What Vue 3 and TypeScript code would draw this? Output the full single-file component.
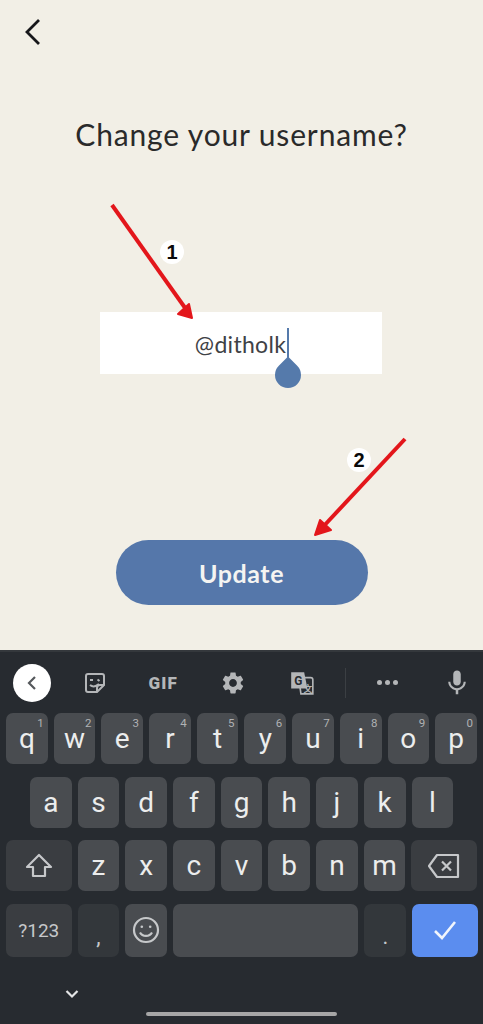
<script setup lang="ts">
const row1 = [
  { l: 'q', n: '1' }, { l: 'w', n: '2' }, { l: 'e', n: '3' }, { l: 'r', n: '4' }, { l: 't', n: '5' },
  { l: 'y', n: '6' }, { l: 'u', n: '7' }, { l: 'i', n: '8' }, { l: 'o', n: '9' }, { l: 'p', n: '0' },
]
const row2 = ['a', 's', 'd', 'f', 'g', 'h', 'j', 'k', 'l']
const row3 = ['z', 'x', 'c', 'v', 'b', 'n', 'm']
</script>

<template>
  <div class="screen">
    <main class="content">
      <button class="back" aria-label="Back">
        <svg width="18" height="28" viewBox="0 0 18 28"><path d="M15 2 3 14l12 12" fill="none" stroke="#17171a" stroke-width="2.8" /></svg>
      </button>
      <h1 class="title">Change your username?</h1>
      <div class="field">
        <span class="value">@ditholk</span>
        <span class="cursor"></span>
        <span class="handle"></span>
      </div>
      <button class="update">Update</button>

      <svg class="arrows" width="483" height="650" viewBox="0 0 483 650">
        <path d="M112 205 188 312" stroke="#e3161b" stroke-width="4" fill="none" />
        <path d="M192 318 178 314 189 304Z" fill="#e3161b" stroke="#e3161b" stroke-width="2" stroke-linejoin="round" />
        <path d="M405 439 321 529" stroke="#e3161b" stroke-width="4" fill="none" />
        <path d="M315 535 320 520 331 530Z" fill="#e3161b" stroke="#e3161b" stroke-width="2" stroke-linejoin="round" />
      </svg>
      <span class="badge badge-one">1</span>
      <span class="badge badge-two">2</span>
    </main>

    <section class="keyboard">
      <div class="toolbar">
        <span class="tool-back">
          <svg width="16" height="18" viewBox="0 0 16 18"><path d="M11 3 5 9l6 6" fill="none" stroke="#55585c" stroke-width="2.2" /></svg>
        </span>
        <span class="tool">
          <svg width="24" height="24" viewBox="0 0 24 24" fill="none" stroke="#b4b6b8" stroke-width="2">
            <path d="M5 3h14a2 2 0 0 1 2 2v9l-7 7H5a2 2 0 0 1-2-2V5a2 2 0 0 1 2-2Z" />
            <path d="M7 14c3 2.500 6 1.500 9-1M14 21v-4a3 3 0 0 1 3-3h4" />
            <path d="M7 9h3M14.500 8.500l2 1.500" />
          </svg>
        </span>
        <span class="tool gif">GIF</span>
        <span class="tool">
          <svg width="26" height="26" viewBox="0 0 24 24"><path fill="#b4b6b8" d="M19.14 12.94c.04-.3.06-.61.06-.94 0-.32-.02-.64-.07-.94l2.03-1.58c.18-.14.23-.41.12-.61l-1.92-3.32c-.12-.22-.37-.29-.59-.22l-2.39.96c-.5-.38-1.03-.7-1.62-.94l-.36-2.54c-.04-.24-.24-.41-.48-.41h-3.84c-.24 0-.43.17-.47.41l-.36 2.540c-.59.24-1.13.57-1.62.94l-2.39-.96c-.22-.08-.47 0-.59.22L2.74 8.87c-.12.21-.08.47.12.61l2.03 1.58c-.05.3-.09.63-.09.94s.02.64.07.94l-2.03 1.58c-.18.14-.23.41-.12.61l1.92 3.32c.12.22.37.29.59.22l2.39-.96c.5.38 1.03.7 1.62.94l.36 2.54c.05.24.24.41.48.41h3.84c.24 0 .44-.17.47-.41l.36-2.54c.59-.24 1.13-.56 1.62-.94l2.39.96c.22.08.47 0 .59-.22l1.92-3.32c.12-.22.07-.47-.12-.61l-2.01-1.58zM12 15.6c-1.98 0-3.6-1.62-3.6-3.6s1.62-3.6 3.6-3.6 3.6 1.62 3.6 3.6-1.62 3.6-3.6 3.6z" /></svg>
        </span>
        <span class="tool">
          <svg width="26" height="26" viewBox="0 0 24 24">
            <path d="M9 7h11a2 2 0 0 1 2 2v13H11Z" fill="#272b30" stroke="#b4b6b8" stroke-width="1.500" />
            <path d="M2 2h12l3 15H2Z" fill="#b4b6b8" />
            <text x="8.500" y="14" class="translate-g" text-anchor="middle">G</text>
            <text x="17.500" y="20" class="translate-z" text-anchor="middle">文</text>
          </svg>
        </span>
        <span class="divider"></span>
        <span class="dots"><i></i><i></i><i></i></span>
        <span class="mic">
          <svg width="30" height="32" viewBox="0 0 24 24"><path fill="#b4b6b8" d="M12 14c1.66 0 3-1.34 3-3V5c0-1.66-1.34-3-3-3S9 3.34 9 5v6c0 1.66 1.34 3 3 3zm5.3-3c0 3-2.54 5.1-5.3 5.1S6.7 14 6.700 11H5c0 3.41 2.72 6.23 6 6.72V21h2v-3.28c3.28-.48 6-3.3 6-6.72h-1.7z" /></svg>
        </span>
      </div>

      <div class="row">
        <span v-for="k in row1" :key="k.l" class="key">{{ k.l }}<sup class="num">{{ k.n }}</sup></span>
      </div>
      <div class="row row-home">
        <span v-for="k in row2" :key="k" class="key">{{ k }}</span>
      </div>
      <div class="row">
        <span class="key wide dark">
          <svg width="30" height="28" viewBox="0 0 30 28"><path d="M15 3 3 15h6v9h12v-9h6Z" fill="none" stroke="#c6c8ca" stroke-width="2.200" stroke-linejoin="round" /></svg>
        </span>
        <span v-for="k in row3" :key="k" class="key">{{ k }}</span>
        <span class="key wide dark">
          <svg width="34" height="26" viewBox="0 0 34 26" fill="none" stroke="#c6c8ca" stroke-width="2.200">
            <path d="M10 2h21v22H10L2 13Z" stroke-linejoin="round" />
            <path d="M15 8.500l9 9M24 8.500l-9 9" />
          </svg>
        </span>
      </div>
      <div class="row row-last">
        <span class="key wide dark symbols">?123</span>
        <span class="key darker mark">,</span>
        <span class="key">
          <svg width="28" height="28" viewBox="0 0 28 28" fill="none" stroke="#c6c8ca" stroke-width="2.200">
            <circle cx="14" cy="14" r="12" />
            <path d="M8 16.500c2.500 4.500 9.500 4.500 12 0" />
            <circle cx="9.800" cy="10.800" r="1.300" fill="#c6c8ca" stroke="none" />
            <circle cx="18.200" cy="10.800" r="1.300" fill="#c6c8ca" stroke="none" />
          </svg>
        </span>
        <span class="key space"></span>
        <span class="key darker mark">.</span>
        <span class="key wide enter">
          <svg width="26" height="22" viewBox="0 0 26 22"><path d="M3 12l7 7L23 3" fill="none" stroke="#f1f5fc" stroke-width="2.600" /></svg>
        </span>
      </div>

      <div class="nav">
        <svg class="hide" width="16" height="10" viewBox="0 0 16 10"><path d="M2.500 2 8 7.500 13.500 2" fill="none" stroke="#e4e5e6" stroke-width="2.200" /></svg>
        <span class="home-bar"></span>
      </div>
    </section>
  </div>
</template>

<style scoped>
.screen {
  width: 483px;
  height: 1024px;
  overflow: hidden;
  display: flex;
  flex-direction: column;
  font-family: Lato, "Open Sans", sans-serif;
  background: #f2efe6;
}

.content {
  position: relative;
  height: 650px;
  flex: none;
  display: flex;
  flex-direction: column;
  align-items: center;
}

button {
  border: 0;
  padding: 0;
  font: inherit;
}

.back {
  align-self: flex-start;
  margin: 18px 0 0 24px;
  width: 18px;
  height: 28px;
  background: none;
}

.title {
  margin: 68px 0 0;
  height: 40px;
  line-height: 40px;
  font-size: 30px;
  font-weight: 400;
  color: #2a2a2a;
  letter-spacing: 0.85px;
}

.field {
  position: relative;
  margin: 158px 0 0 -1px;
  width: 282px;
  height: 62px;
  background: #fff;
  display: flex;
  align-items: center;
  justify-content: center;
}

.value {
  font-size: 23px;
  letter-spacing: 0.3px;
  color: #3f4246;
  padding-right: 1px;
  margin-top: 2px;
}

.cursor {
  position: absolute;
  left: 187px;
  top: 16px;
  width: 2px;
  height: 38px;
  background: #557aab;
}

.handle {
  position: absolute;
  left: 175px;
  top: 50px;
  width: 26px;
  height: 26px;
  border-radius: 0 50% 50% 50%;
  background: #557aab;
  transform: rotate(45deg);
}

.update {
  margin: 166px 0 0 0;
  width: 252px;
  height: 65px;
  border-radius: 33px;
  background: #5577aa;
  color: #f4f4f2;
  font-size: 25px;
  font-weight: 700;
  letter-spacing: 0.6px;
}

.arrows {
  position: absolute;
  left: 0;
  top: 0;
  pointer-events: none;
}

.badge {
  position: absolute;
  width: 24px;
  height: 24px;
  border-radius: 50%;
  background: #fff;
  color: #0a0a0a;
  font-family: "Liberation Sans", sans-serif;
  font-weight: 700;
  font-size: 20px;
  line-height: 24px;
  text-align: center;
}

.badge-one {
  left: 160px;
  top: 240px;
}

.badge-two {
  left: 347px;
  top: 448px;
}

.keyboard {
  flex: 1;
  background: #272b30;
  border-top: 2px solid #34383c;
  display: flex;
  flex-direction: column;
  color: #eceded;
  font-family: Roboto, sans-serif;
}

.toolbar {
  height: 61px;
  display: flex;
  align-items: center;
  padding-left: 13px;
}

.tool-back {
  width: 38px;
  height: 38px;
  border-radius: 50%;
  background: #fff;
  margin-right: 9px;
  display: flex;
  align-items: center;
  justify-content: center;
}

.tool {
  width: 69.500px;
  display: flex;
  align-items: center;
  justify-content: center;
}

.gif {
  font-weight: 900;
  font-size: 17px;
  letter-spacing: 1.200px;
  color: #b4b6b8;
  margin-left: -1px;
}

.translate-g {
  font: 700 11px Roboto, sans-serif;
  fill: #272b30;
}

.translate-z {
  font: 700 8px "Noto Sans CJK SC", sans-serif;
  fill: #b4b6b8;
}

.divider {
  width: 1px;
  height: 30px;
  background: #3b3f43;
  margin-left: 8px;
}

.dots {
  width: 82px;
  display: flex;
  justify-content: center;
  gap: 3px;
}

.dots i {
  width: 5px;
  height: 5px;
  border-radius: 50%;
  background: #b4b6b8;
}

.mic {
  display: flex;
  margin-left: 14px;
}

.row {
  display: flex;
  gap: 6px;
  padding: 0 6px;
  height: 51px;
  margin-bottom: 12.500px;
}

.row-home {
  padding-left: 30px;
}

.row-last {
  height: 53px;
  margin-bottom: 0;
}

.key {
  position: relative;
  flex: none;
  width: 41.700px;
  height: 100%;
  border-radius: 7px;
  background: #494c50;
  display: flex;
  align-items: center;
  justify-content: center;
  font-size: 28px;
}

.num {
  position: absolute;
  right: 4px;
  top: 4px;
  font-size: 11.500px;
  line-height: 12px;
  color: #b0b2b4;
}

.wide {
  width: 65.600px;
}

.dark {
  background: #3a3d41;
}

.darker {
  background: #33373b;
}

.mark {
  color: #c6c8ca;
  font-size: 22px;
  padding-top: 12px;
  box-sizing: border-box;
}

.symbols {
  font-size: 19px;
  color: #c6c8ca;
}

.space {
  width: 185.500px;
}

.enter {
  background: #5b8def;
}

.nav {
  position: relative;
  flex: 1;
}

.hide {
  position: absolute;
  left: 64px;
  top: 32px;
}

.home-bar {
  position: absolute;
  left: 146px;
  top: 55px;
  width: 191px;
  height: 4px;
  border-radius: 2px;
  background: #a6a6a6;
}
</style>
